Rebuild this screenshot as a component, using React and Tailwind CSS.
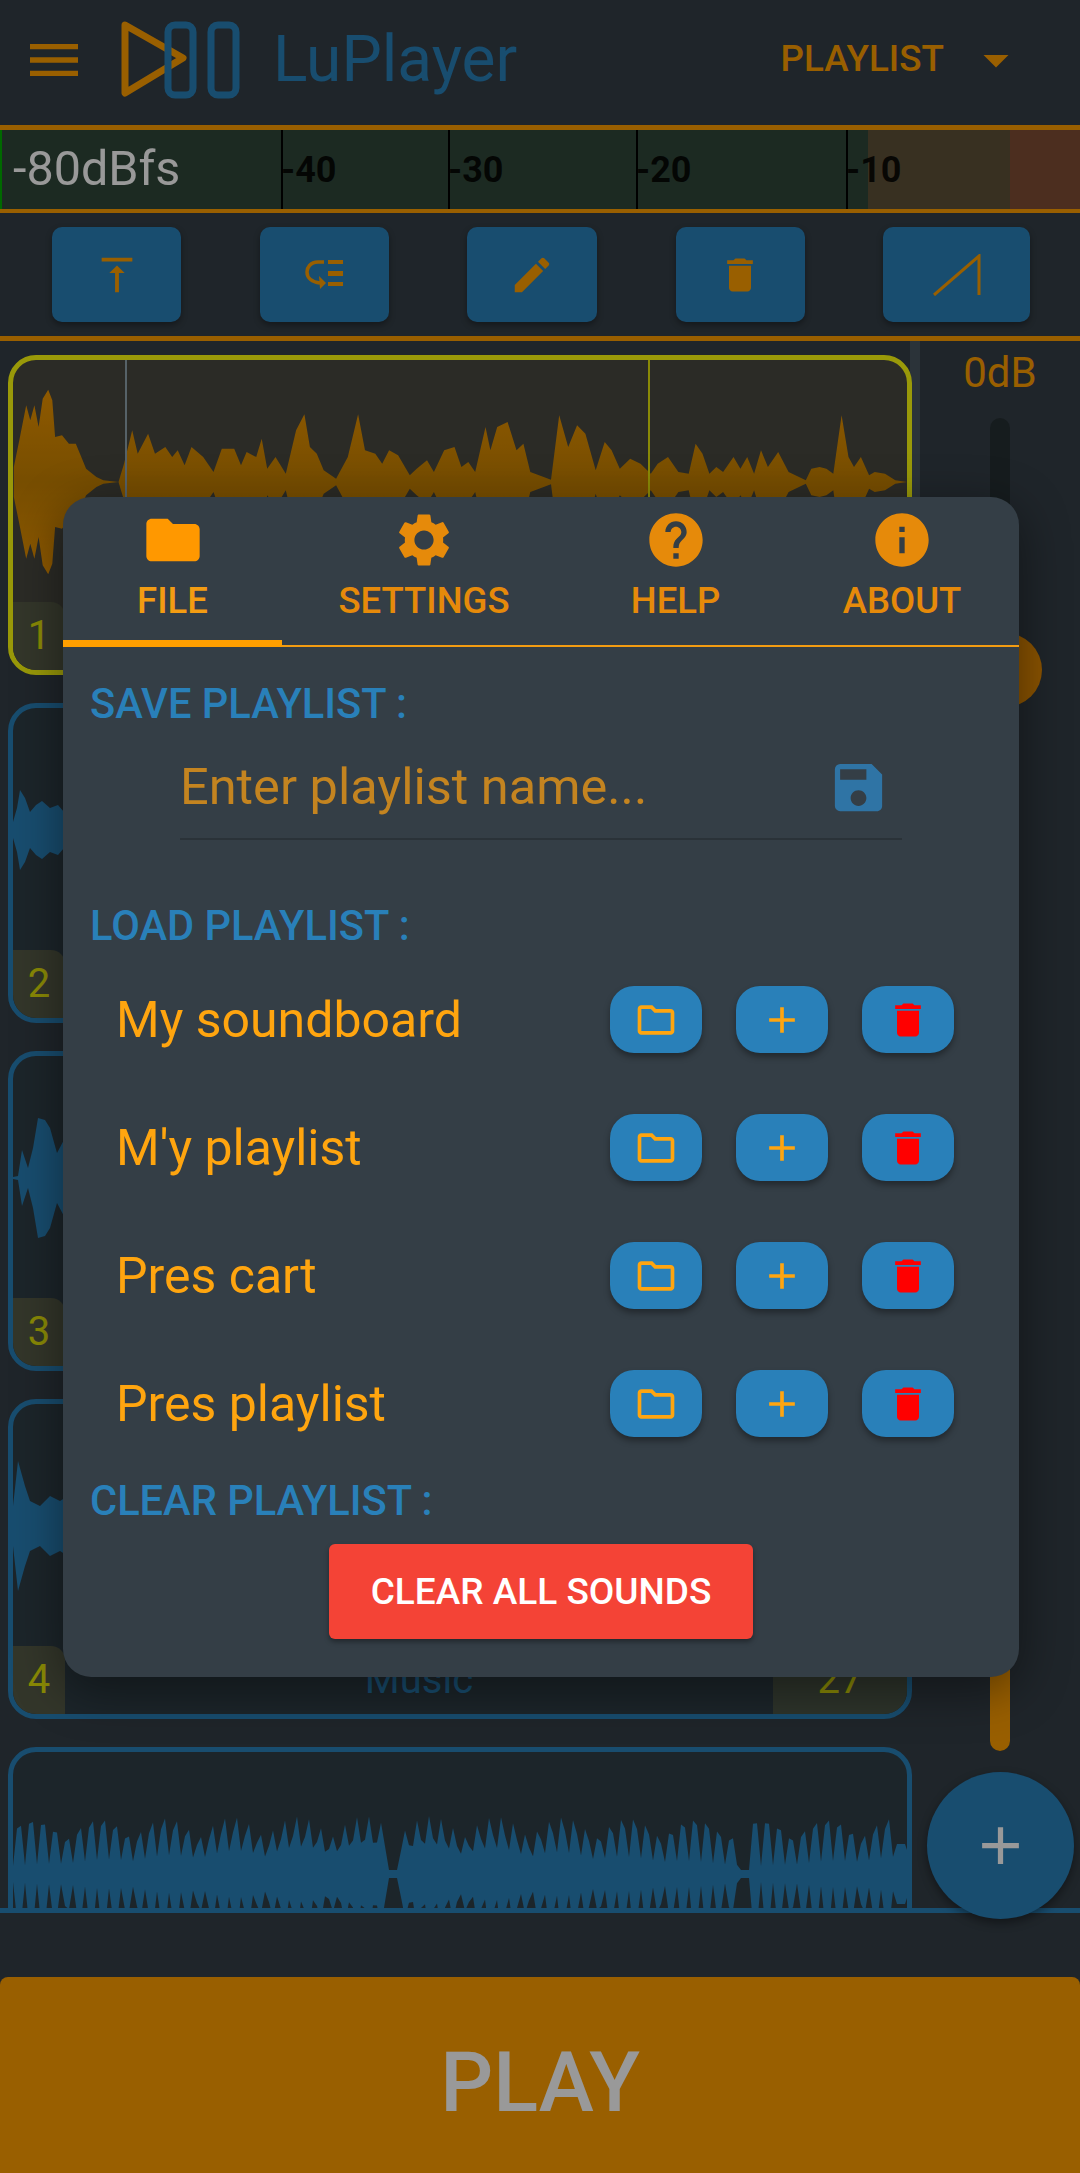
import React from 'react';
import {
  MdMenu, MdArrowDropDown, MdVerticalAlignTop, MdEdit, MdDelete, MdFolder, MdSettings,
  MdHelp, MdInfo, MdSave, MdOutlineFolder, MdAdd,
} from 'react-icons/md';

// upper outline of the first track, read off the reference (x, y)
const firstOutline = [
  [20,380],[28,300],[38,195],[44,240],[50,195],[56,260],[62,175],[70,148],[76,180],[80,290],[90,285],[100,310],[110,310],[118,350],[125,385],[140,410],[150,420],[172,425],
  [180,370],[192,270],[200,340],[215,280],[225,340],[240,320],[250,350],[258,330],[268,375],[278,320],[295,350],[310,395],[322,325],[340,325],[350,375],[358,335],[372,350],[380,295],[388,385],[400,350],[415,400],
  [430,270],[442,222],[450,320],[460,340],[470,390],[488,415],[505,350],[520,222],[530,330],[545,340],[555,370],[565,330],[578,345],[595,405],[605,385],[620,360],[630,395],[645,330],[660,320],[670,380],[680,365],[690,395],
  [705,260],[712,330],[722,260],[737,245],[750,330],[760,310],[770,395],[800,418],[812,225],[825,320],[838,255],[850,280],[865,390],[878,305],[888,330],[900,385],[915,355],[930,370],[945,400],[955,370],[970,350],[985,395],
  [1000,400],[1010,310],[1020,340],[1030,400],[1040,380],[1050,395],[1065,350],[1075,385],[1085,350],[1095,400],[1105,330],[1115,380],[1130,335],[1145,395],[1170,420],[1178,385],[1190,380],[1200,385],[1210,400],
  [1222,225],[1232,350],[1240,380],[1250,350],[1262,405],[1270,395],[1285,400],[1300,420],[1318,425],
];
const wave1 = firstOutline.map(([x, y]) => [x / 1.452 - 13, (425 - y) / 3]);
const wave2 = [[0,8],[4,22],[7,40],[12,32],[17,18],[23,25],[29,29],[37,22],[45,25],[51,18],[60,20]];
const wave3 = [[0,1],[5,2],[9,28],[15,10],[20,30],[25,60],[32,58],[37,50],[44,25],[52,40],[60,30]];
const wave4 = [[0,20],[5,65],[12,40],[17,25],[27,20],[37,30],[47,25],[55,30],[60,25]];
const wave5 = Array.from({ length: 224 }, (_, i) => {
  const x = i * 4;
  const spike = Math.abs(Math.sin(i * 2.1));
  const slow = 0.55 + 0.45 * Math.abs(Math.sin(i * 0.19 + 0.6));
  let h = 8 + 50 * spike * slow;
  if (Math.abs(x - 380) < 5 || Math.abs(x - 732) < 5) h = 4;
  if (x > 880) h = 30;
  return [x, h];
});
wave5.push([894, 24]);

function Wave({ data, active }) {
  const top = data.map(([x, h]) => `${x.toFixed(1)},${(122 - h).toFixed(1)}`);
  const bottom = [...data].reverse().map(([x, h]) => `${x.toFixed(1)},${(122 + h).toFixed(1)}`);
  return (
    <svg viewBox="0 0 894 242" className="w-full h-full block">
      <defs>
        <linearGradient id="waveOrange" gradientUnits="userSpaceOnUse" x1="0" y1="22" x2="0" y2="222">
          <stop offset="0" stopColor="#f09600" />
          <stop offset="0.5" stopColor="#c78200" />
          <stop offset="1" stopColor="#f09600" />
        </linearGradient>
      </defs>
      <polygon points={[...top, ...bottom].join(' ')} fill={active ? 'url(#waveOrange)' : '#2980b9'} />
    </svg>
  );
}

function Track({ num, active, data, title, count }) {
  return (
    <div className={`relative shrink-0 h-[320px] flex flex-col rounded-[28px] border-[5px] overflow-hidden ${active ? 'border-[#ffff10] bg-[#484840]' : 'border-[#2980b9] bg-[#2f3e47]'}`}>
      <div className="relative h-[242px]">
        <Wave data={data} active={active} />
        {active && <div className="absolute top-0 bottom-0 left-[112px] w-[2px] bg-[#8fa3ad]" />}
        {active && <div className="absolute top-0 bottom-0 left-[635px] w-[2px] bg-[#e6e60a]" />}
      </div>
      <div className="flex h-[68px] items-center text-[40px] text-[#e6e60a]">
        <div className="w-[52px] h-full bg-[#555a46] rounded-tr-[14px] flex items-center justify-center">{num}</div>
        <div className="flex-1 text-center text-[#2980b9]">{title}</div>
        <div className="w-[134px] h-full bg-[#4e5748] rounded-tl-[14px] flex items-center justify-center">{count}</div>
      </div>
    </div>
  );
}

function ToolButton({ className, children }) {
  return (
    <button className={`h-[95px] rounded-[10px] bg-[#2980b9] text-[#ff9f00] flex items-center justify-center shadow-[0_3px_6px_rgba(0,0,0,0.35)] ${className}`}>
      {children}
    </button>
  );
}

function PlaylistRow({ name }) {
  return (
    <div className="h-[67px] pl-[53px] pr-[65px] flex items-center">
      <div className="flex-1 pt-[2px] text-[50px] text-[#ffa50f]">{name}</div>
      <div className="flex gap-[34px]">
        <button className="w-[92px] h-[67px] rounded-[24px] bg-[#2980b9] text-[#ffa50f] flex items-center justify-center shadow-[0_4px_6px_rgba(0,0,0,0.35)]"><MdOutlineFolder size={44} /></button>
        <button className="w-[92px] h-[67px] rounded-[24px] bg-[#2980b9] text-[#ffa50f] flex items-center justify-center shadow-[0_4px_6px_rgba(0,0,0,0.35)]"><MdAdd size={44} /></button>
        <button className="w-[92px] h-[67px] rounded-[24px] bg-[#2980b9] text-[#ff0000] flex items-center justify-center shadow-[0_4px_6px_rgba(0,0,0,0.35)]"><MdDelete size={44} /></button>
      </div>
    </div>
  );
}

function Tab({ icon, label, active }) {
  return (
    <div className={`relative flex flex-col items-center pt-[11px] ${active ? 'text-[#ff9800]' : 'text-[#e68a0a]'}`}>
      {icon}
      <div className={`mt-[8px] text-[36.5px] leading-[42px] font-medium ${active ? 'text-[#f39c12]' : ''}`}>{label}</div>
      {active && <div className="absolute left-0 right-0 bottom-[-2px] h-[7px] bg-[#ff9f00]" />}
    </div>
  );
}

export default function App() {
  return (
    <div className="relative w-[1080px] h-[2173px] overflow-hidden flex flex-col bg-[#343e46] font-['Roboto',sans-serif]">
      {/* header */}
      <div className="h-[125px] shrink-0 flex items-center pl-[22px] pr-[54px]">
        <MdMenu size={64} className="text-[#ff9f00] mt-[-6px]" />
        <svg width="120" height="84" viewBox="121 18 120 84" className="ml-[35px] mt-[-6px]">
          <path d="M125 25 L183 58 L125 93 Z" fill="none" stroke="#ff9f00" strokeWidth="7" strokeLinejoin="round" />
          <rect x="168" y="25" width="25" height="70" rx="7" fill="none" stroke="#2980b9" strokeWidth="7" />
          <rect x="211" y="25" width="25" height="70" rx="7" fill="none" stroke="#2980b9" strokeWidth="7" />
        </svg>
        <div className="ml-[32px] mt-[-5px] text-[64px] leading-none text-[#2980b9]">LuPlayer</div>
        <div className="ml-auto mt-[-8px] text-[36.8px] font-medium text-[#ff9f00]">PLAYLIST</div>
        <MdArrowDropDown size={60} className="ml-[22px] mt-[-6px] text-[#ff9f00]" />
      </div>

      {/* level meter */}
      <div className="h-[88px] shrink-0 flex border-t-[5px] border-b-[4px] border-[#ff9f00] bg-[linear-gradient(90deg,#2f4739_868px,#5e5038_868px,#5e5038_1010px,#7f4d35_1010px)]">
        <div className="w-[281px] border-l-[2px] border-[#00b000] pl-[11px] flex items-center text-[48.5px] text-white">-80dBfs</div>
        <div className="w-[167px] border-l-[2px] border-black flex items-center text-[36px] font-bold text-black/85"><span className="ml-[-2px]">-40</span></div>
        <div className="w-[188px] border-l-[2px] border-black flex items-center text-[36px] font-bold text-black/85"><span className="ml-[-2px]">-30</span></div>
        <div className="w-[210px] border-l-[2px] border-black flex items-center text-[36px] font-bold text-black/85"><span className="ml-[-2px]">-20</span></div>
        <div className="flex-1 border-l-[2px] border-black flex items-center text-[36px] font-bold text-black/85"><span className="ml-[-2px]">-10</span></div>
      </div>

      {/* toolbar */}
      <div className="h-[128px] shrink-0 flex items-center pl-[52px] gap-[78.5px] border-b-[5px] border-[#ff9f00]">
        <ToolButton className="w-[129px]"><MdVerticalAlignTop size={46} /></ToolButton>
        <ToolButton className="w-[129px]">
          <svg width="38" height="29" viewBox="0 0 38 29" fill="currentColor">
            <rect x="23" y="0" width="15" height="4" />
            <rect x="23" y="11" width="15" height="5" />
            <rect x="23" y="22" width="15" height="4" />
            <path d="M19 2 H13 C5 2 2 8 2 12 C2 18 7 22 15 23" fill="none" stroke="currentColor" strokeWidth="3.5" />
            <polygon points="14,16 21,23 15,29" />
          </svg>
        </ToolButton>
        <ToolButton className="w-[130px]"><MdEdit size={46} /></ToolButton>
        <ToolButton className="w-[129px]"><MdDelete size={44} /></ToolButton>
        <ToolButton className="w-[147px]">
          <svg width="48" height="42" viewBox="0 0 48 42" fill="none" stroke="currentColor" strokeWidth="3">
            <path d="M1 41 L46 2 V41" />
          </svg>
        </ToolButton>
      </div>

      {/* tracks + fader */}
      <div className="relative h-[1572px] shrink-0 flex border-b-[5px] border-[#2980b9]">
        <div className="relative w-[920px] h-[1567px] overflow-hidden pl-[8px] pr-[8px] pt-[14px] flex flex-col gap-[28px]">
          <div className="absolute right-0 top-0 w-[10px] h-[400px] bg-[#485660]" />
          <Track num="1" active data={wave1} />
          <Track num="2" data={wave2} />
          <Track num="3" data={wave3} />
          <Track num="4" data={wave4} title="Music" count="27" />
          <Track data={wave5} />
        </div>
        <div className="w-[160px] flex flex-col items-center pt-[8px]">
          <div className="text-[42px] leading-[47px] text-[#ff9f00]">0dB</div>
          <div className="relative mt-[22px] w-[20px] h-[1333px] rounded-full bg-[#262f33]">
            <div className="absolute left-0 right-0 top-[252px] bottom-0 rounded-b-full bg-[#ff9f00]" />
            <div className="absolute left-[-22px] top-[215px] w-[74px] h-[74px] rounded-full bg-[#e68a00]" />
          </div>
        </div>
        <button className="absolute left-[927px] top-[1431px] w-[147px] h-[147px] rounded-full bg-[#2980b9] text-white flex items-center justify-center shadow-[0_4px_10px_rgba(0,0,0,0.4)]">
          <MdAdd size={63} />
        </button>
      </div>

      <div className="flex-1" />
      <button className="h-[196px] shrink-0 rounded-t-[8px] bg-[#ff9f00] text-white text-[83px] font-medium pt-[16px]">PLAY</button>

      {/* dim + file dialog */}
      <div className="absolute inset-0 bg-black/40" />
      <div className="absolute left-[63px] top-[497px] w-[956px] h-[1180px] rounded-[28px] bg-[#343e46] shadow-[0_12px_50px_rgba(0,0,0,0.45)]">
        <div className="h-[150px] grid grid-cols-[219px_284px_219px_234px] border-b-[2px] border-[#f39c12]">
          <Tab active label="FILE" icon={<MdFolder size={64} />} />
          <Tab label="SETTINGS" icon={<MdSettings size={64} />} />
          <Tab label="HELP" icon={<MdHelp size={64} />} />
          <Tab label="ABOUT" icon={<MdInfo size={64} />} />
        </div>

        <div className="mt-[36px] pl-[27px] text-[41.6px] leading-[42px] font-medium text-[#2980b9]">SAVE PLAYLIST :</div>
        <div className="mt-[15px] ml-[117px] w-[722px] h-[100px] flex items-center border-b-[2px] border-[#2a3238] pb-[4px]">
          <input placeholder="Enter playlist name..." className="flex-1 min-w-0 bg-transparent outline-none text-[50.5px] placeholder:text-[#c48420]" />
          <MdSave size={63} className="mr-[12px] text-[#2f74a5]" />
        </div>

        <div className="mt-[65px] pl-[27px] text-[41.6px] leading-[42px] font-medium text-[#2980b9]">LOAD PLAYLIST :</div>
        <div className="mt-[39px] flex flex-col gap-[61px]">
          <PlaylistRow name="My soundboard" />
          <PlaylistRow name="M'y playlist" />
          <PlaylistRow name="Pres cart" />
          <PlaylistRow name="Pres playlist" />
        </div>

        <div className="mt-[43px] pl-[27px] text-[41.6px] leading-[42px] font-medium text-[#2980b9]">CLEAR PLAYLIST :</div>
        <div className="mt-[22px] flex justify-center">
          <button className="w-[424px] h-[95px] rounded-[6px] bg-[#f44336] text-white text-[37px] font-medium shadow-[0_3px_5px_rgba(0,0,0,0.35)]">CLEAR ALL SOUNDS</button>
        </div>
      </div>
    </div>
  );
}
